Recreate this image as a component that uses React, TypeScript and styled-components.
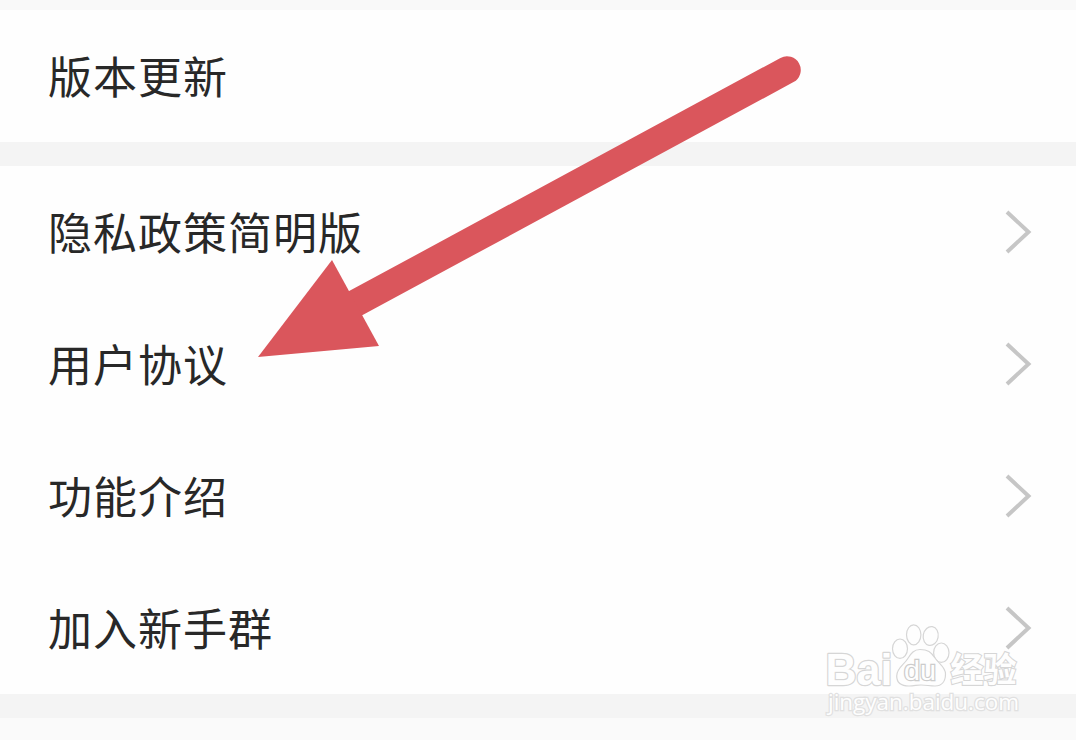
import React from "react";
import styled, {createGlobalStyle} from "styled-components";

interface IMenu {
  label: string;
  arrow?: boolean;
}

const versionMenu: IMenu[] = [{label: "版本更新"}];
const aboutMenu: IMenu[] = [
  {label: "隐私政策简明版", arrow: true},
  {label: "用户协议", arrow: true},
  {label: "功能介绍", arrow: true},
  {label: "加入新手群", arrow: true},
];

function MenuGroup({items}: {items: IMenu[]}) {
  return (
    <Group>
      {items.map((item) => (
        <Row key={item.label}>
          <Label>{item.label}</Label>
          {item.arrow && (
            <Chevron viewBox="0 0 28 44">
              <path d="M3 2 L24.5 22 L3 42" />
            </Chevron>
          )}
        </Row>
      ))}
    </Group>
  );
}

function Pointer() {
  return (
    <PointerSvg viewBox="0 0 560 320">
      <line x1="546" y1="20" x2="98" y2="262.2" />
      <polygon points="17,307 91,210 138,296" />
    </PointerSvg>
  );
}

function Watermark() {
  return (
    <WatermarkSvg viewBox="0 0 206 100">
      <text className="latin" x="7.5" y="64.5" fontSize="44" textLength="67" lengthAdjust="spacingAndGlyphs">
        Bai
      </text>
      <ellipse cx="82" cy="28.7" rx="7.5" ry="9.7" />
      <ellipse cx="95.7" cy="14.8" rx="7.2" ry="10" />
      <ellipse cx="112.7" cy="16" rx="7.5" ry="9.5" transform="rotate(10 112.7 16)" />
      <ellipse cx="123.3" cy="32.7" rx="7.7" ry="9.7" />
      <path d="M102 29.5 C94 29.5 92 36 88 41 C84 46 78.7 49 78.7 56 C78.7 63 84 66 91 66 C96 66 99 65 103 65 C108 65 112 66 117 66 C124 66 127.5 61 127.5 54 C127.5 47 121 44 117 38 C113 32 110 29.5 102 29.5 Z" />
      <text className="du" x="86" y="60" fontSize="27" textLength="32" lengthAdjust="spacingAndGlyphs">
        du
      </text>
      <text className="hanzi" x="132.5" y="62" fontSize="34" textLength="66" lengthAdjust="spacingAndGlyphs">
        经验
      </text>
      <text className="url" x="10" y="90" fontSize="22" textLength="191" lengthAdjust="spacingAndGlyphs">
        jingyan.baidu.com
      </text>
    </WatermarkSvg>
  );
}

function App() {
  return (
    <Page>
      <GlobalStyle />
      <TopEdge />
      <MenuGroup items={versionMenu} />
      <Divider />
      <MenuGroup items={aboutMenu} />
      <Divider />
      <Pointer />
      <Watermark />
    </Page>
  );
}

const GlobalStyle = createGlobalStyle`
  body {
    margin: 0;
    background-color: #fafafa;
  }
`;
const Page = styled.div`
  position: relative;
  width: 1076px;
  height: 740px;
  overflow: hidden;
  background-color: #fafafa;
  font-family: "Noto Sans CJK SC", sans-serif;
`;
const TopEdge = styled.div`
  height: 10px;
  background-color: #f9f9f9;
`;
const Group = styled.div`
  background-color: #fefefe;
`;
const Divider = styled.div`
  height: 24px;
  background-color: #f4f4f4;
`;
const Row = styled.div`
  display: flex;
  align-items: center;
  justify-content: space-between;
  height: 132px;
  padding: 0 44px 0 48px;
  box-sizing: border-box;
`;
const Label = styled.span`
  padding-bottom: 2px;
  font-size: 44px;
  line-height: 64px;
  letter-spacing: 1px;
  color: #282828;
`;
const Chevron = styled.svg`
  width: 28px;
  height: 44px;
  path {
    fill: none;
    stroke: #c6c6c6;
    stroke-width: 4;
  }
`;
const PointerSvg = styled.svg`
  position: absolute;
  left: 241px;
  top: 50px;
  width: 560px;
  height: 320px;
  line {
    stroke: #da565c;
    stroke-width: 27.5;
    stroke-linecap: round;
  }
  polygon {
    fill: #da565c;
  }
`;
const WatermarkSvg = styled.svg`
  position: absolute;
  left: 818px;
  top: 620px;
  width: 206px;
  height: 100px;
  fill: #fefefe;
  stroke: #d6d6d6;
  stroke-width: 1.2;
  .latin {
    font-family: "Liberation Sans", sans-serif;
    font-weight: 700;
    stroke-width: 2.4;
    stroke-linejoin: round;
    paint-order: stroke;
  }
  .du {
    font-family: "Liberation Sans", sans-serif;
    font-weight: 400;
    stroke: #cccccc;
    stroke-width: 2.4;
    paint-order: stroke;
  }
  .hanzi {
    font-family: "Noto Sans CJK SC", sans-serif;
    font-weight: 700;
    stroke-width: 2.2;
    paint-order: stroke;
  }
  .url {
    font-family: "Open Sans", "Noto Sans", sans-serif;
    font-weight: 400;
    stroke: #e0e0e0;
    stroke-width: 2.4;
    paint-order: stroke;
  }
`;
export default App;
